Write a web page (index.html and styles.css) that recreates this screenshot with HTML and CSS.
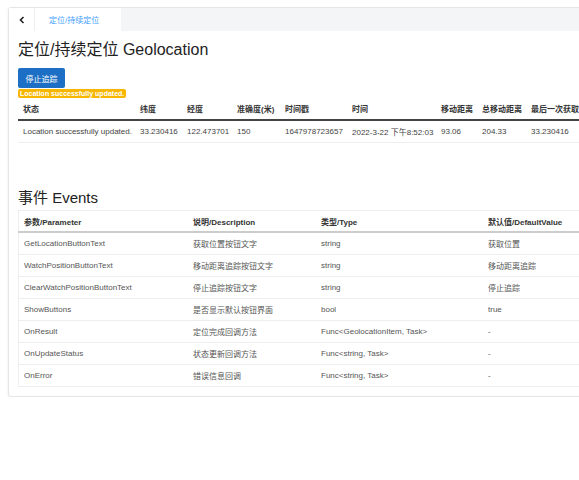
FILE: index.html
```html
<!DOCTYPE html>
<html lang="zh-CN">
<head>
    <meta charset="UTF-8">
    <title>定位/持续定位 Geolocation</title>
    <link rel="stylesheet" href="styles.css">
</head>
<body>

    <div class="card">
        <!-- Tab bar -->
        <div class="tabs">
            <div class="tab-back">
                <svg width="8" height="8" viewBox="0 0 8 8"><path d="M5.5 1 L2.5 4 L5.5 7" fill="none" stroke="#222" stroke-width="1.6"/></svg>
            </div>
            <div class="tab active">定位/持续定位</div>
        </div>

        <div class="card-body">
            <h1 class="title">定位/持续定位 Geolocation</h1>

            <button class="btn-primary">停止追踪</button>
            <span class="badge-warning">Location successfully updated.</span>

            <table class="geo-table">
                <thead>
                    <tr>
                        <th class="c-status">状态</th>
                        <th class="c-lat">纬度</th>
                        <th class="c-lng">经度</th>
                        <th class="c-acc">准确度(米)</th>
                        <th class="c-ts">时间戳</th>
                        <th class="c-time">时间</th>
                        <th class="c-move">移动距离</th>
                        <th class="c-total">总移动距离</th>
                        <th class="c-last">最后一次获取</th>
                    </tr>
                </thead>
                <tbody>
                    <tr>
                        <td>Location successfully updated.</td>
                        <td>33.230416</td>
                        <td>122.473701</td>
                        <td>150</td>
                        <td>1647978723657</td>
                        <td>2022-3-22 下午8:52:03</td>
                        <td>93.06</td>
                        <td>204.33</td>
                        <td>33.230416</td>
                    </tr>
                </tbody>
            </table>

            <h2 class="section-title">事件 Events</h2>

            <table class="events-table">
                <thead>
                    <tr>
                        <th class="c-param">参数/Parameter</th>
                        <th class="c-desc">说明/Description</th>
                        <th class="c-type">类型/Type</th>
                        <th>默认值/DefaultValue</th>
                    </tr>
                </thead>
                <tbody>
                    <tr><td>GetLocationButtonText</td><td>获取位置按钮文字</td><td>string</td><td>获取位置</td></tr>
                    <tr><td>WatchPositionButtonText</td><td>移动距离追踪按钮文字</td><td>string</td><td>移动距离追踪</td></tr>
                    <tr><td>ClearWatchPositionButtonText</td><td>停止追踪按钮文字</td><td>string</td><td>停止追踪</td></tr>
                    <tr><td>ShowButtons</td><td>是否显示默认按钮界面</td><td>bool</td><td>true</td></tr>
                    <tr><td>OnResult</td><td>定位完成回调方法</td><td>Func&lt;GeolocationItem, Task&gt;</td><td>-</td></tr>
                    <tr><td>OnUpdateStatus</td><td>状态更新回调方法</td><td>Func&lt;string, Task&gt;</td><td>-</td></tr>
                    <tr><td>OnError</td><td>错误信息回调</td><td>Func&lt;string, Task&gt;</td><td>-</td></tr>
                </tbody>
            </table>
        </div>
    </div>

</body>
</html>
```

FILE: styles.css
```css
html, body {
    overflow: hidden;
}
body {
    margin: 0;
    font-family: "Liberation Sans", "Noto Sans CJK SC", sans-serif;
    color: #333;
    background-color: #ffffff;
}
.card {
    margin: 7px 0 0 8px;
    width: 660px;
    border: 1px solid #e6e6e6;
    border-radius: 3px;
    box-shadow: 0 1px 3px rgba(0, 0, 0, 0.08);
    background-color: #fff;
}
.tabs {
    display: flex;
    height: 23px;
    background-color: #f4f5f7;
}
.tab-back {
    width: 25px;
    display: flex;
    align-items: center;
    justify-content: center;
    background-color: #fff;
    border-right: 1px solid #eceef1;
}
.tab {
    display: flex;
    align-items: center;
    padding: 0 22px 0 14px;
    font-size: 8px;
    color: #409eff;
    background-color: #fff;
}
.card-body {
    padding: 9px 9px 9px 9px;
}
.title {
    margin: 0 0 8px 0;
    font-size: 16px;
    line-height: 20px;
    font-weight: normal;
    color: #222;
}
.btn-primary {
    display: block;
    width: 47px;
    height: 20px;
    padding: 0;
    font-family: inherit;
    font-size: 8px;
    color: #fff;
    background-color: #1c6fc4;
    border: none;
    border-radius: 2px;
}
.badge-warning {
    display: block;
    width: fit-content;
    margin-top: 1px;
    padding: 0 2px;
    height: 9px;
    line-height: 9px;
    font-size: 7px;
    font-weight: bold;
    color: #fff;
    background-color: #f7b600;
    border-radius: 2px;
}
/* status table */
.geo-table {
    border-collapse: collapse;
    table-layout: fixed;
    width: 620px;
    font-size: 8px;
    white-space: nowrap;
}
.geo-table th {
    text-align: left;
    font-weight: bold;
    height: 21px;
    padding: 0 5px;
    border-bottom: 2px solid #444;
}
.geo-table td {
    height: 21px;
    padding: 0 5px;
    color: #444;
    border-bottom: 1px solid #eee;
}
.c-status { width: 107px; }
.c-lat { width: 37px; }
.c-lng { width: 40px; }
.c-acc { width: 38px; }
.c-ts { width: 57px; }
.c-time { width: 79px; }
.c-move { width: 31px; }
.c-total { width: 39px; }
.c-last { width: 102px; }
.section-title {
    margin: 46px 0 3px 0;
    font-size: 15px;
    line-height: 18px;
    font-weight: normal;
    color: #222;
}
/* events table */
.events-table {
    border-collapse: collapse;
    table-layout: fixed;
    width: 630px;
    font-size: 8px;
    border: 1px solid #eee;
}
.events-table th {
    text-align: left;
    font-weight: bold;
    color: #333;
    height: 20px;
    padding: 0 5px;
    border-bottom: 2px solid #ccc;
}
.events-table td {
    height: 21px;
    padding: 0 5px;
    color: #555;
    border-bottom: 1px solid #eee;
}
.c-param { width: 159px; }
.c-desc { width: 118px; }
.c-type { width: 157px; }
```
